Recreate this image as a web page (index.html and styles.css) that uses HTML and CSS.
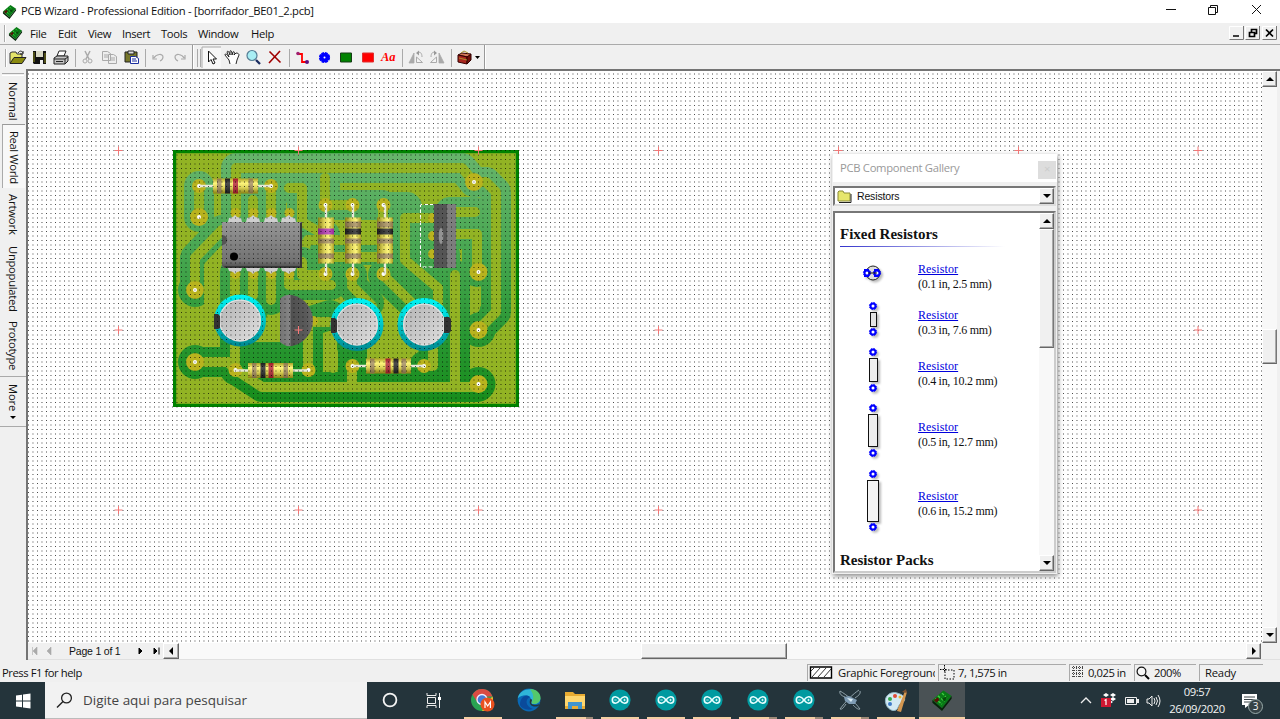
FILE: index.html
```html
<!DOCTYPE html>
<html lang="en">
<head>
<meta charset="utf-8">
<title>PCB Wizard</title>
<link rel="stylesheet" href="styles.css">
</head>
<body>
<svg class="defs" width="0" height="0">
  <defs>
    <symbol id="chip" viewBox="0 0 16 16"><path d="M1 8 9 1l6 4-7 9z" fill="#087a16"/><path d="M1 8l7 6v2L1 10zM8 14l7-9v2l-7 9z" fill="#07250a"/><path d="M3 7l5 4M5 5l5 4M8 3l4 4" stroke="#3fcf3f" stroke-width="1" stroke-dasharray="2 1"/><path d="M2 8l3-2 1 2-2 2z" fill="#571208"/><path d="M8 7l4-2-2 4z" fill="#064b0b"/></symbol>
    <symbol id="arduino" viewBox="0 0 22 22"><circle cx="11" cy="11" r="10.6" fill="#009aa0"/><path d="M11 11C9 8.300 7.800 7.800 6.500 7.800a3.200 3.200 0 0 0 0 6.400C7.800 14.200 9 13.700 11 11s3.200-3.200 4.500-3.200a3.200 3.200 0 0 1 0 6.400c-1.300 0-2.500-.5-4.500-3.200z" fill="none" stroke="#e8ffff" stroke-width="1.600"/><path d="M5.300 11h2.400M14.300 11h2.400M15.500 9.800v2.400" stroke="#e8ffff" stroke-width=".8"/></symbol>
    <symbol id="pad" viewBox="0 0 10 10"><circle cx="5" cy="5" r="2.500" fill="#fff" stroke="#00f" stroke-width="2"/><circle cx="5" cy="5" r="3.600" fill="none" stroke="#00f" stroke-width="1" stroke-dasharray="1.500 1.330"/></symbol>
    <linearGradient id="gap" gradientUnits="userSpaceOnUse" x1="0" y1="150" x2="0" y2="407"><stop offset="0" stop-color="#68b56c"/><stop offset=".35" stop-color="#4ca955"/><stop offset=".7" stop-color="#2b9835"/><stop offset="1" stop-color="#168c1a"/></linearGradient>
    <linearGradient id="tubeV" x1="0" y1="0" x2="0" y2="1"><stop offset="0" stop-color="#c4b92a"/><stop offset=".3" stop-color="#fff45c"/><stop offset=".6" stop-color="#f2e64a"/><stop offset="1" stop-color="#b5aa18"/></linearGradient>
    <linearGradient id="shadeV" x1="0" y1="0" x2="0" y2="1"><stop offset="0" stop-color="#000" stop-opacity=".12"/><stop offset=".3" stop-color="#fff" stop-opacity=".2"/><stop offset="1" stop-color="#000" stop-opacity=".25"/></linearGradient>
    <linearGradient id="ic" x1="0" y1="0" x2="0" y2="1"><stop offset="0" stop-color="#969696"/><stop offset=".85" stop-color="#727272"/><stop offset="1" stop-color="#4c4c4c"/></linearGradient>
    <linearGradient id="cyan" x1="0" y1="0" x2="0" y2="1"><stop offset="0" stop-color="#00f4f4"/><stop offset=".35" stop-color="#00d8d8"/><stop offset="1" stop-color="#008890"/></linearGradient>
    <linearGradient id="lid" x1="0" y1="0" x2="1" y2="1"><stop offset="0" stop-color="#b4b4b4"/><stop offset=".55" stop-color="#cacaca"/><stop offset="1" stop-color="#e0e0e0"/></linearGradient>
    <linearGradient id="to92" x1="0" y1="0" x2="1" y2="0"><stop offset="0" stop-color="#747474"/><stop offset=".3" stop-color="#858585"/><stop offset=".34" stop-color="#505050"/><stop offset=".8" stop-color="#5a5a5a"/><stop offset="1" stop-color="#6c6c6c"/></linearGradient>
    <pattern id="grid" x="28" y="60" width="45" height="45" patternUnits="userSpaceOnUse">
      <path d="M0 .5H45M0 5H45M0 9.500H45M0 14H45M0 18.500H45M0 23H45M0 27.500H45M0 32H45M0 36.500H45M0 41H45" stroke="#000" stroke-opacity=".8" stroke-width=".95" stroke-dasharray=".95 3.550"/>
    </pattern>
    <g id="res">
      <path d="M-14 7.500H59" stroke="#e9ead8" stroke-width="2.400"/>
      <rect width="45" height="15" fill="url(#tubeV)"/>
      <path d="M4 0h4.500v15H4zM35.500 0H40v15h-4.500z" fill="#a58c56"/>
    </g>
    <g id="cross"><path d="M-4 0H4M0-4V4" stroke="#f47878" stroke-width="1"/></g>
  </defs>
</svg>

<div class="app">
  <header class="titlebar">
    <svg class="appicon" width="15" height="15"><use href="#chip"/></svg>
    <span class="title">PCB Wizard - Professional Edition - [borrifador_BE01_2.pcb]</span>
    <svg class="winbtns" width="100" height="22"><path d="M2 9.500h10M44.500 7.500h7v7h-7zM46.500 7.500v-2h7v7h-2" fill="none" stroke="#111"/><path d="M88 5l9 9M97 5l-9 9" stroke="#111"/></svg>
  </header>

  <nav class="menubar">
    <i class="grip"></i>
    <svg class="appicon" width="15" height="15"><use href="#chip"/></svg>
    <span class="m1">File</span><span class="m2">Edit</span><span class="m3">View</span><span class="m4">Insert</span><span class="m5">Tools</span><span class="m6">Window</span><span class="m7">Help</span>
    <svg class="mdibtns" width="50" height="14"><path d="M.5.500h14v13H.5zM16.500.500h14v13h-14zM33.500.500h14v13h-14z" fill="#f0f0f0" stroke="#fff"/><path d="M.5 13.500h14V0M16.500 13.500h14V0M33.500 13.500h14V0" fill="none" stroke="#777"/><path d="M4 10h6M20.500 6.500h5v4h-5zM22.500 6V3.500h5v4H26M37 3.500l7 7M44 3.500l-7 7" fill="none" stroke="#000" stroke-width="1.700"/></svg>
  </nav>

  <div class="toolbar">
    <svg width="486" height="24" viewBox="0 45 486 24">
      <path d="M5.500 49V67M197.500 49V67M200.500 49V67M75.500 49V67M145.500 49V67M289.500 49V67M402.500 49V67M451.500 49V67" stroke="#aaa"/>
      <path d="M192.500 45V69M484.500 45V69" stroke="#999"/><path d="M193.500 45V69M6.500 49V67M485.500 45V69" stroke="#fff"/>
      <path d="M10 63V53l2-1h4l1 2h5v3" fill="#e4e46a" stroke="#333"/><path d="M10 63.500l4-6h12l-4 6z" fill="#8a8a10" stroke="#222"/><path d="M18 53c2-3 4-2 5 0m0-2v3h-3" fill="none" stroke="#222"/>
      <path d="M33 51h13v13H34l-1-1z" fill="#111"/><path d="M36 51h7v6h-7z" fill="#d9d9c5"/><path d="M34 52v10M45 53v10" stroke="#8b8b1c"/><path d="M40 60h3v4h-3z" fill="#eee"/>
      <path d="M57 56l2-5h7l-2 5z" fill="#fff" stroke="#222"/><path d="M54 58l3-2h11v5l-3 3H54z" fill="#c4c4c4" stroke="#222"/><path d="M54 59h11l3-2M65 59v5M56 61.500h7" fill="none" stroke="#222"/>
      <path d="M85 51l4 8M90 51l-4 8" stroke="#aaa" stroke-width="1.500"/><circle cx="85" cy="61" r="2" fill="none" stroke="#aaa"/><circle cx="90" cy="61" r="2" fill="none" stroke="#aaa"/>
      <path d="M102.500 51.500h5l3 2v7h-8zM108.500 54.500h5l3 2v7h-8zM104 55h4M104 57h4M110 58h5M110 60h5" fill="#eee" stroke="#aaa"/>
      <path d="M125 52h12v10h-12z" fill="#77772b" stroke="#222"/><path d="M128 51h6v3h-6z" fill="#ddd" stroke="#222"/><path d="M130.500 56.500h5l3 2v5h-8z" fill="#fff" stroke="#1c2fa0"/><path d="M132 59h4M132 61h5" stroke="#1c2fa0"/>
      <path d="M153 55v4h4M154 58c2-4 9-5 9-1 0 1-1 3-3 4M185 55v4h-4M184 58c-2-4-9-5-9-1 0 1 1 3 3 4" fill="none" stroke="#aaa" stroke-width="1.200"/>
      <path d="M202 47h19v21h-19z" fill="#f7f7f7"/><path d="M202 68V47h19" fill="none" stroke="#aaa"/>
      <path d="M208.500 51v11l2.500-2.500 2 4.500 2-1-2-4h3.500z" fill="#fff" stroke="#111"/>
      <path d="M230 64l-1-4-4-5c0-2 2-1 4 2l-2-5c1-2 2 0 3 3v-4c1-1 2 0 2 4l1-3c1-1 2 0 1 3l2-2c2 0 3 1 3 2l-2 5-1 4" fill="#fff" stroke="#111" stroke-width=".9"/>
      <circle cx="252" cy="55.500" r="5" fill="#a8eef4" stroke="#557d95" stroke-width="1.200"/><path d="M256 60l4 4" stroke="#1a2c60" stroke-width="2.300"/>
      <path d="M269.500 51.500l11 11M280 51l-11 12" stroke="#a00000" stroke-width="1.600"/>
      <path d="M297 54h5v8h5" fill="none" stroke="#f00" stroke-width="1.800"/><circle cx="298" cy="53.500" r="1.800" fill="#a02070"/><circle cx="307" cy="62" r="2" fill="#601080"/>
      <circle cx="324.500" cy="57.500" r="4.600" fill="#00f" stroke="#00f" stroke-width="2" stroke-dasharray="2.800 .8"/><circle cx="324.500" cy="57.500" r="1" fill="#fff"/>
      <path d="M340.500 53h11v9h-11z" fill="#008200" stroke="#153c15"/><path d="M362.500 53h11v9h-11z" fill="red" stroke="#e03030"/>
      <path d="M409 63l5-10v10zM440 63l-1 0V53l5 10z" fill="#aaa" stroke="#aaa" stroke-width=".8"/><path d="M416.500 62.500V57l6 5.500zM436.500 62.500V57l-6 5.500z" fill="#f4f4f4" stroke="#aaa"/><path d="M417 53c3-2 5 0 5 4M436 53c-3-2-5 0-5 4" fill="none" stroke="#aaa"/><path d="M416 53l3-2.500v5zM437 53l-3-2.500v5z" fill="#999"/>
      <path d="M458 55l4-2 9 1-3 3z" fill="#d27b5b" stroke="#300"/><path d="M458 55l9 2v7l-9-2z" fill="#a9261e" stroke="#300"/><path d="M467 57l4-3v6l-4 4z" fill="#701109" stroke="#300"/><path d="M461 53l3-2 4 2M459 58l8 2" fill="none" stroke="#ab942e"/><path d="M475 56h5l-2.500 3z" fill="#000"/>
    </svg>
    <span class="aa">Aa</span>
  </div>

  <main class="work">
    <aside class="tabs">
      <i class="hgrip"></i>
      <span class="t1">Normal</span><span class="t2 active">Real World</span><span class="t3">Artwork</span><span class="t4">Unpopulated</span><span class="t5">Prototype</span>
      <span class="t6">More<b></b></span>
    </aside>

    <section class="document">
      <div class="sheetrow">
      <svg class="sheet" width="1234" height="572" viewBox="28 71 1234 572">
        <rect x="28" y="71" width="1234" height="572" fill="#fff"/>
        <svg x="173" y="150" width="346" height="257" viewBox="173 150 346 257">
          <rect x="173" y="150" width="346" height="257" fill="#92b324"/>
          <!-- clearance around copper -->
          <g fill="none" stroke="url(#gap)" stroke-width="30" stroke-linejoin="round" stroke-linecap="round">
            <path d="M474 182L462 168H236V214"/>
            <path d="M474 182H486L496 192V312L478 330"/>
            <path d="M199 186V217"/>
            <path d="M195 290V258L222 230"/>
            <path d="M271 186V222M253 200V222M289 188H302V222L325 235"/>
            <path d="M325 205H352L382 205M325 205V178M383 207H407"/>
            <path d="M325 275H302V262M325 275V250H383"/>
            <path d="M235 272V315M253 272V310M271 272V300M289 272V285H331"/>
            <path d="M352 275V286L369 303M383 275L418 309M407 220V264L438 292V312M407 220H438"/>
            <path d="M433 237H408M450 234H477V272M450 212H475M433 254H445V270"/>
            <path d="M195 362H228L236 370 262 387H478M235 335V370"/>
            <path d="M308 370V322L330 315M245 357H290M352 367V345M424 366H433V355M455 275V380"/>
          </g>
          <g fill="url(#gap)"><circle cx="195" cy="290" r="17"/><circle cx="195" cy="362" r="17"/><circle cx="478.500" cy="330" r="17"/><circle cx="478.500" cy="384" r="17"/></g>
          <!-- copper tracks -->
          <g fill="none" stroke="#92b324" stroke-width="10" stroke-linejoin="round" stroke-linecap="round">
            <path d="M474 182L462 168H236V214"/>
            <path d="M474 182H486L496 192V312L478 330"/>
            <path d="M199 186V217"/>
            <path d="M195 290V258L222 230M209 335V266L224 250"/>
            <path d="M271 186V222M253 200V222M289 188H302V222L325 235"/>
            <path d="M325 205H352M325 205V178M383 205V220"/>
            <path d="M325 275H302V262M308 240H383M325 257H383"/>
            <path d="M235 272V300M253 272V295M271 272V300M289 272V285H331"/>
            <path d="M352 275V286L372 306M383 275L418 309M405 218V260L438 288V315M405 218H438"/>
            <path d="M450 234H477V272M450 212H475"/>
            <path d="M195 362H228L236 370 262 387H478M235 335V370"/>
            <path d="M308 370V322L330 322M333 352V368M352 367V387M424 366H433V345M455 275V385"/>
            <path d="M475 296V308"/>
          </g>
          <g fill="#b9b31e">
            <circle cx="199" cy="186" r="7"/><circle cx="271" cy="186" r="7"/><circle cx="199" cy="217" r="9"/><circle cx="195" cy="290" r="9"/><circle cx="195" cy="362" r="9"/><circle cx="474" cy="182" r="9"/><circle cx="478.500" cy="272" r="9"/><circle cx="478.500" cy="330" r="9"/><circle cx="478.500" cy="384" r="9"/>
            <circle cx="325.500" cy="205" r="7"/><circle cx="352.500" cy="205" r="7"/><circle cx="383.500" cy="205" r="7"/><circle cx="325.500" cy="274" r="7"/><circle cx="352.500" cy="274" r="7"/><circle cx="383.500" cy="274" r="7"/>
            <circle cx="235.500" cy="370" r="7"/><circle cx="308.500" cy="370" r="7"/><circle cx="352.500" cy="366" r="7"/><circle cx="424" cy="366" r="7"/>
            <circle cx="235.500" cy="213" r="5"/><circle cx="253.500" cy="213" r="5"/><circle cx="271.500" cy="213" r="5"/><circle cx="289.500" cy="213" r="5"/><circle cx="235.500" cy="274" r="5"/><circle cx="253.500" cy="274" r="5"/><circle cx="271.500" cy="274" r="5"/><circle cx="289.500" cy="274" r="5"/>
            <circle cx="433" cy="218" r="5"/><circle cx="433" cy="236" r="5"/><circle cx="433" cy="254" r="5"/><circle cx="313" cy="321" r="5"/>
          </g>
          <rect x="174.500" y="151.500" width="343" height="254" fill="none" stroke="#008200" stroke-width="3.400"/>
          <g fill="#fff"><circle cx="199" cy="186" r="2"/><circle cx="271" cy="186" r="2"/><circle cx="199" cy="217" r="2"/><circle cx="195" cy="290" r="2"/><circle cx="195" cy="362" r="2"/><circle cx="474" cy="182" r="2"/><circle cx="478.500" cy="272" r="2"/><circle cx="478.500" cy="330" r="2"/><circle cx="478.500" cy="384" r="2"/><circle cx="325.500" cy="205" r="2"/><circle cx="352.500" cy="205" r="2"/><circle cx="383.500" cy="205" r="2"/><circle cx="325.500" cy="274" r="2"/><circle cx="352.500" cy="274" r="2"/><circle cx="383.500" cy="274" r="2"/><circle cx="235.500" cy="370" r="2"/><circle cx="308.500" cy="370" r="2"/><circle cx="352.500" cy="366" r="2"/><circle cx="424" cy="366" r="2"/></g>

          <g transform="translate(213 178.500)"><use href="#res"/><path d="M12 0h5v15h-5z" fill="#222"/><path d="M20 0h5v15h-5z" fill="#b6232d"/><rect width="45" height="15" fill="url(#shadeV)"/></g>
          <g transform="translate(248 363)"><use href="#res"/><path d="M12.500 0h5v15h-5z" fill="#222"/><path d="M20.500 0h5v15h-5z" fill="#b6232d"/><rect width="45" height="15" fill="url(#shadeV)"/></g>
          <g transform="translate(366 358.500)"><use href="#res"/><path d="M19.500 0h5v15h-5z" fill="#b6232d"/><path d="M27.500 0h5v15h-5z" fill="#222"/><rect width="45" height="15" fill="url(#shadeV)"/></g>
          <g transform="translate(334 217.500) rotate(90)"><path d="M-12 8H57" stroke="#e9ead8" stroke-width="2.400"/><rect width="46" height="16" fill="url(#tubeV)"/><path d="M11 0h6v16h-6z" fill="#b232b2"/><path d="M21 0h5v16h-5zM36 0h5v16h-5z" fill="#a58c56"/><rect width="46" height="16" fill="url(#shadeV)"/></g>
          <g transform="translate(361 217.500) rotate(90)"><path d="M-12 8H57" stroke="#e9ead8" stroke-width="2.400"/><rect width="46" height="16" fill="url(#tubeV)"/><path d="M4 0h6v16H4zM21 0h5v16h-5zM36 0h5v16h-5z" fill="#a58c56"/><path d="M11 0h6v16h-6z" fill="#222"/><rect width="46" height="16" fill="url(#shadeV)"/></g>
          <g transform="translate(393 217.500) rotate(90)"><path d="M-12 8H57" stroke="#e9ead8" stroke-width="2.400"/><rect width="46" height="16" fill="url(#tubeV)"/><path d="M4 0h6v16H4zM21 0h5v16h-5zM36 0h5v16h-5z" fill="#a58c56"/><path d="M11 0h6v16h-6z" fill="#222"/><rect width="46" height="16" fill="url(#shadeV)"/></g>

          <g fill="#cfcfcf"><path d="M228 222l1-4 4-1 2-2 2 2 4 1 1 4zM246 222l1-4 4-1 2-2 2 2 4 1 1 4zM264 222l1-4 4-1 2-2 2 2 4 1 1 4zM281 222l1-4 4-1 3-2 2 2 4 1 1 4z"/><path d="M228 268l1 3 4 1 2 2 2-2 4-1 1-3zM246 268l1 3 4 1 2 2 2-2 4-1 1-3zM264 268l1 3 4 1 2 2 2-2 4-1 1-3zM281 268l1 3 4 1 3 2 2-2 4-1 1-3z"/></g>
          <path d="M222 222h80v46h-78l-2-2z" fill="url(#ic)"/><path d="M300 223v43h-76l2 2h76v-46z" fill="#383838"/><path d="M222 235c7 0 7 10 0 10z" fill="#555"/><circle cx="234" cy="256.500" r="4" fill="#000"/>

          <circle cx="240" cy="320.500" r="26" fill="url(#cyan)"/><circle cx="240" cy="320.500" r="21" fill="url(#lid)"/><circle cx="240" cy="320.500" r="20.300" fill="none" stroke="#e0e0e0" stroke-width="1.300"/><path d="M214 314h4l2 2v12l-2 1h-4z" fill="#333"/>
          <circle cx="357" cy="324.500" r="26.500" fill="url(#cyan)"/><circle cx="357" cy="324.500" r="21" fill="url(#lid)"/><circle cx="357" cy="324.500" r="20.300" fill="none" stroke="#e0e0e0" stroke-width="1.300"/><path d="M331 318h4l2 2v12l-2 1h-4z" fill="#333"/>
          <circle cx="424" cy="324.500" r="26.500" fill="url(#cyan)"/><circle cx="424" cy="324.500" r="21" fill="url(#lid)"/><circle cx="424" cy="324.500" r="20.300" fill="none" stroke="#e0e0e0" stroke-width="1.300"/><path d="M444 317h5l2 2v12l-2 2h-5z" fill="#333"/>
          <path d="M280 299q5-5 12-4a26 26 0 0 1 0 51q-7 1-12-4z" fill="url(#to92)"/>

          <path d="M434 204.500h-13.500v62.500H434" fill="none" stroke="#fff" stroke-dasharray="4 2"/>
          <path d="M434 204h22v64h-22z" fill="#555"/><path d="M447 204h9v64h-9z" fill="#7d7d7d"/><ellipse cx="441" cy="236" rx="2.300" ry="8" fill="#929292"/>
        </svg>
        <rect x="28" y="71" width="1234" height="572" fill="url(#grid)"/>
        <use href="#cross" x="118.500" y="150.500"/><use href="#cross" x="298.500" y="150.500"/><use href="#cross" x="478.500" y="150.500"/><use href="#cross" x="658.500" y="150.500"/><use href="#cross" x="838.500" y="150.500"/><use href="#cross" x="1018.500" y="150.500"/><use href="#cross" x="1198" y="150.500"/>
        <use href="#cross" x="118.500" y="330"/><use href="#cross" x="298.500" y="330"/><use href="#cross" x="658.500" y="330"/><use href="#cross" x="1198" y="330"/>
        <use href="#cross" x="118.500" y="510"/><use href="#cross" x="298.500" y="510"/><use href="#cross" x="478.500" y="510"/><use href="#cross" x="658.500" y="510"/><use href="#cross" x="1198" y="510"/>
      </svg>
      <div class="vscroll big"><button class="up"></button><i class="thumb"></i><button class="down"></button></div>
      </div>
      <div class="pager">
        <svg width="38" height="16"><path d="M4.500 4v8M9 4v8L5 8zM23 4v8l-4-4z" fill="#aaa" stroke="#aaa" stroke-width=".6"/></svg>
        <span class="pagelabel">Page 1 of 1</span>
        <svg width="32" height="16"><path d="M5 5v6l3-3zM20 5v6l3-3zM25 4.500v7" fill="#000" stroke="#000"/></svg>
        <button class="left"></button>
        <div class="track"><i></i></div>
        <button class="right"></button>
        <i class="corner"></i>
      </div>
    </section>
  </main>

  <footer class="status">
    <span class="help">Press F1 for help</span>
    <div class="cell c1"><svg width="24" height="13"><path d="M1.500 1h21v11h-21z" fill="#fff" stroke="#000" stroke-width="1.400"/><path d="M3 11L11 2M9 11l8-9M15 11l7-8M2 5l3-3" stroke="#222" stroke-width=".9"/></svg><span>Graphic Foreground</span></div>
    <div class="cell c2"><svg width="16" height="15"><path d="M0 4.500h7M4.500 0v7" stroke="#000" stroke-dasharray="1.500 1"/><path d="M5 5h9v9H5z" fill="none" stroke="#000" stroke-dasharray="1.500 1.500"/></svg><span>7, 1,575 in</span></div>
    <div class="cell c3"><svg width="13" height="13"><path d="M1 1.500h11M1 4.500h11M1 7.500h11M1 10.500h11M2.500 0v12M5.500 0v12M8.500 0v12M11.500 0v12" stroke="#444" stroke-dasharray="1 1"/></svg><span>0,025 in</span></div>
    <div class="cell c4"><svg width="14" height="14"><circle cx="5.500" cy="5.500" r="4.400" fill="#f7f7f7" stroke="#111" stroke-width="1.200"/><path d="M9 9l4 4" stroke="#000" stroke-width="2"/></svg><span>200%</span></div>
    <div class="cell c5"><span>Ready</span></div>
  </footer>

  <div class="taskbar">
    <div class="start"><svg width="16" height="16"><path d="M1 2.500l6-.8v5.800H1zM8 1.500L15.500.5v7H8zM1 8.500h6v5.800l-6-.8zM8 8.500h7.500v7L8 14.500z" fill="#fff"/></svg></div>
    <div class="search"><svg width="17" height="17"><circle cx="10.500" cy="6" r="4.900" fill="none" stroke="#222" stroke-width="1.300"/><path d="M7 9.500L1 15.500" stroke="#222" stroke-width="1.400"/></svg><span>Digite aqui para pesquisar</span></div>
    <div class="apps">
      <div><svg width="18" height="18"><circle cx="9" cy="9" r="6.400" fill="none" stroke="#f4f4f4" stroke-width="1.800"/></svg></div>
      <div class="view"><svg width="17" height="17"><path d="M1 1v2.500h9V1M1 16v-2.500h9V16M1.500 5.500h8v6h-8zM13.500 1v15" fill="none" stroke="#eee"/><path d="M12 5h3v3h-3z" fill="#fff"/></svg></div>
      <div class="on"><svg width="25" height="25"><circle cx="12" cy="12" r="11" fill="#29a352"/><path d="M2.500 6.500A11 11 0 0 1 22.500 8.500H12l-4.500 6z" fill="#d94b43"/><path d="M22.500 8.500A11 11 0 0 1 12 23l5-9z" fill="#f2bd2c"/><circle cx="12" cy="11.500" r="5" fill="#4779d5" stroke="#eef" stroke-width="1.300"/><circle cx="17.500" cy="16.500" r="7" fill="#e8501f"/><path d="M15 20v-6l2.700 4 2.700-4v6" fill="none" stroke="#fff" stroke-width="1.200"/></svg></div>
      <div><svg width="24" height="24"><circle cx="12" cy="12" r="11.400" fill="#0968b4"/><path d="M.8 10C3 1 16-2 22 6c3 6 0 10-5 10-4 0-5-1-3-3 1-6-7-8-13-3z" fill="#2fb6d8"/><path d="M13 1c9 0 13 8 9 13-3 3-8 2-7 0C18 8 15 4 13 1z" fill="#54c86b"/><path d="M3 17C3 9 9 6 13 9c-5 2-5 9 3 12-6 2-12-1-13-4z" fill="#0a4a9b"/><path d="M13.500 11c2 0 1.500 2 1 3-1 3 4 4 8 2l-1 2c-5 2-11-1-8-7z" fill="#24343b"/></svg></div>
      <div class="on split"><svg width="22" height="20"><path d="M1 2h8l2 2h10v15H1z" fill="#e9ac32"/><path d="M1 6h20v10H1z" fill="#ffd76e"/><path d="M4 19v-7h14v7h-4v-3H8v3z" fill="#4194cd"/></svg></div>
      <div class="on"><svg width="22" height="22"><use href="#arduino"/></svg></div>
      <div class="on"><svg width="22" height="22"><use href="#arduino"/></svg></div>
      <div class="on"><svg width="22" height="22"><use href="#arduino"/></svg></div>
      <div class="on split"><svg width="22" height="22"><use href="#arduino"/></svg></div>
      <div class="on split"><svg width="22" height="22"><use href="#arduino"/></svg></div>
      <div class="on split"><svg width="24" height="22"><path d="M2 2c7 4 14 10 20 18M21 1C15 5 8 12 2 20M2 2c-1 3 2 5 5 6M22 2c1 3-2 5-5 7M2 20c2 1 4-2 6-5M22 20c-2 1-5-2-7-4" fill="none" stroke="#9caeb5" stroke-width=".9"/><path d="M6 8l5-1 8 4-2 4-6 0-4-3z" fill="#7f9cb4"/><path d="M9 9l6 1-2 3z" fill="#dceef6"/></svg></div>
      <div class="on"><svg width="24" height="23"><path d="M2 15C-1 7 7 2 13 4c8 2 10 7 5 10-4 1-3 5-6 7-4 2-9-2-10-6z" fill="#d4eaf3" stroke="#91b7c5"/><circle cx="6" cy="10" r="2" fill="#38aa4e"/><circle cx="11" cy="7" r="2" fill="#e04b38"/><circle cx="6" cy="15" r="2" fill="#3f7bc8"/><circle cx="16" cy="8" r="1.500" fill="#eab52f"/><path d="M13 22L21 2l2 1-6 20z" fill="#d49750"/><path d="M18 3l4-3 1 4z" fill="#7b502f"/></svg></div>
      <div class="on current"><svg width="22" height="22"><use href="#chip"/></svg></div>
    </div>
    <div class="tray">
      <svg width="82" height="20"><path d="M2 12l5-5 5 5" fill="none" stroke="#eee" stroke-width="1.300"/><path d="M24 4l3-2 3 2-3 2zM31 4l3-2 3 2-3 2zM31 8l3-2 3 2-3 2zM28 11l3-2 3 2-3 2z" fill="#fff"/><path d="M22 7h10v9H22z" fill="#cf1731"/><path d="M25.500 9.500l1.500-1V14" fill="none" stroke="#fff" stroke-width="1.200"/><path d="M46.500 6.500h11v7h-11z" fill="none" stroke="#eee"/><path d="M48 8h7v4h-7zM58 8h2v4h-2z" fill="#eee"/><path d="M68 8h2l3-3v10l-3-3h-2zM75 7q2 3 0 6M77 6q3 4 0 8M79 4q4 6 0 12" fill="none" stroke="#eee"/></svg>
      <div class="clock"><span>09:57</span><span>26/09/2020</span></div>
      <div class="notify"><svg width="18" height="16"><path d="M1 1h15v11H8l-4 3v-3H1z" fill="#fff"/><path d="M3 4h11M3 6.500h11M3 9h7" stroke="#3a4448"/></svg><b>3</b></div>
    </div>
  </div>
</div>

<div class="gallery">
  <div class="ghead"><span>PCB Component Gallery</span><i>×</i></div>
  <div class="combo"><svg width="16" height="13"><path d="M1 11V2l1-1h4l1 2h6v8z" fill="#e6e66c" stroke="#8b8b37"/><path d="M2 12.500h12V4" fill="none" stroke="#222"/></svg><span>Resistors</span><button class="down"></button></div>
  <div class="glist">
    <div class="gitems">
      <h2>Fixed Resistors</h2>
      <hr>
      <div class="item i1"><svg width="24" height="24"><circle cx="11" cy="11" r="7" fill="#ddd" stroke="#222"/><path d="M2 7h5v8H2zM12 7h5v8h-5z" fill="#00f"/><use href="#pad" x="0" y="6" width="10" height="10"/><use href="#pad" x="10" y="6" width="10" height="10"/><path d="M6 11h9" stroke="#111"/></svg><p><a>Resistor</a>(0.1 in, 2.5 mm)</p></div>
      <div class="item i2"><svg width="24" height="38"><use href="#pad" x="6" y="0" width="10" height="10"/><rect x="8.500" y="11.500" width="6" height="14" fill="#e3e3e3" stroke="#111"/><use href="#pad" x="6" y="26" width="10" height="10"/></svg><p><a>Resistor</a>(0.3 in, 7.6 mm)</p></div>
      <div class="item i3"><svg width="24" height="48"><use href="#pad" x="6" y="0" width="10" height="10"/><rect x="7.500" y="11.500" width="8" height="23" fill="#eee" stroke="#111"/><use href="#pad" x="6" y="36" width="10" height="10"/></svg><p><a>Resistor</a>(0.4 in, 10.2 mm)</p></div>
      <div class="item i4"><svg width="24" height="58"><use href="#pad" x="6" y="0" width="10" height="10"/><rect x="6.500" y="11.500" width="9" height="32" fill="#eee" stroke="#111"/><use href="#pad" x="6" y="45" width="10" height="10"/></svg><p><a>Resistor</a>(0.5 in, 12.7 mm)</p></div>
      <div class="item i5"><svg width="24" height="66"><use href="#pad" x="6" y="0" width="10" height="10"/><rect x="5.500" y="11.500" width="11" height="41" fill="#f4f4f4" stroke="#111"/><use href="#pad" x="6" y="53" width="10" height="10"/></svg><p><a>Resistor</a>(0.6 in, 15.2 mm)</p></div>
      <h2 class="packs">Resistor Packs</h2>
    </div>
    <div class="vscroll small"><button class="up"></button><i class="thumb"></i><button class="down"></button></div>
  </div>
</div>
</body>
</html>
```
FILE: styles.css
```css
* { box-sizing: border-box; }
body { margin: 0; width: 1280px; height: 719px; overflow: hidden; background: #f0f0f0; color: #111; font: 11.25px "Open Sans", "Noto Sans", sans-serif; }
.defs { position: absolute; }
svg { display: block; flex: none; }
i { font-style: normal; }
.app { display: flex; flex-direction: column; height: 719px; }
.titlebar { height: 23px; background: #fff; display: flex; align-items: center; padding: 0 0 2px 2px; }
.title { margin-left: 4px; letter-spacing: -.28px; }
.appicon { position: relative; top: 1px; }
.winbtns { margin-left: auto; margin-right: 16px; }
.menubar { height: 21px; display: flex; align-items: center; padding-left: 4px; }
.grip { width: 2px; height: 17px; border-left: 1px solid #aaa; border-right: 1px solid #fff; margin-right: 2px; }
.menubar span { letter-spacing: -.35px; }
.menubar .appicon { top: 0; }
.m1 { width: 28px; margin-left: 7px; }
.m2 { width: 30px; }
.m3 { width: 34px; }
.m4 { width: 39px; }
.m5 { width: 37px; }
.m6 { width: 53px; }
.mdibtns { margin-left: auto; margin-right: 1px; margin-bottom: 2px; }
.toolbar { height: 25px; border-top: 1px solid #aaa; position: relative; }
.aa { position: absolute; left: 381px; top: 5px; color: red; font: italic bold 12.5px "Liberation Serif", serif; }
.work { height: 592px; display: flex; }
.tabs { width: 26px; display: flex; flex-direction: column; }
.hgrip { width: 22px; height: 3px; margin: 4px 0 1px 2px; border-top: 1px solid #aaa; border-bottom: 1px solid #fff; }
.tabs span { writing-mode: vertical-rl; width: 23px; margin-left: 2px; display: flex; justify-content: center; align-items: center; letter-spacing: -.15px; }
.tabs .active { background: #f8f8f8; border-top: 1px solid #999; border-left: 1px solid #aaa; padding-top: 2px; letter-spacing: -.4px; }
.t1 { height: 47px; padding-top: 2px; } .t2 { height: 64px; } .t3 { height: 53px; } .t4 { height: 75px; }
.tabs .t4 { letter-spacing: -.3px; }
.tabs .t5 { height: 60px; letter-spacing: -.3px; }
.tabs .t6 { height: 51px; width: 26px; margin-left: 0; border-top: 1px solid #aaa; border-bottom: 1px solid #aaa; }
.t6 b { display: block; width: 0; height: 0; border: 3px solid transparent; border-top: 3px solid #000; border-bottom: 0; margin-top: 4px; }
.document { width: 1254px; border-left: 2px solid #747474; border-top: 2px solid #747474; height: 591px; }
.sheetrow { display: flex; height: 572px; }
button { flex: none; display: flex; align-items: center; justify-content: center; width: 15px; height: 16px; padding: 0; background: #f0f0f0; border: 1px solid #fff; border-right-color: #666; border-bottom-color: #666; box-shadow: inset -1px -1px #aaa; }
button::before { content: ""; border: 4px solid transparent; }
.up::before { border-top: 0; border-bottom-color: #000; }
.down::before { border-bottom: 0; border-top-color: #000; }
.left::before { border-left: 0; border-right-color: #000; }
.right::before { border-right: 0; border-left-color: #000; }
.vscroll { display: flex; flex-direction: column; background: #f8f8f8; }
.thumb { background: #f0f0f0; border: 1px solid #fff; border-right-color: #777; border-bottom-color: #666; box-shadow: inset -1px -1px #aaa; }
.big { width: 15px; }
.big .thumb { height: 35px; margin-top: 242px; }
.big .down { margin-top: auto; }
.pager { display: flex; align-items: center; height: 17px; background: #f0f0f0; border-bottom: 1px solid #e0e0e0; font: 10.5px "Liberation Sans", sans-serif; }
.pagelabel { width: 68px; padding-left: 3px; letter-spacing: -.2px; }
.pager .left { width: 16px; margin-left: -3px; }
.track { flex: 1; height: 16px; background: #f9f9f9; }
.track i { display: block; width: 146px; height: 16px; margin-left: 462px; background: #f0f0f0; border: 1px solid #fff; border-right-color: #666; border-bottom-color: #666; box-shadow: inset -1px -1px #aaa; }
.corner { width: 19px; }
.status { height: 21px; display: flex; align-items: center; padding-left: 2px; padding-top: 1px; letter-spacing: -.45px; }
.help { width: 805px; }
.cell { height: 17px; display: flex; align-items: center; gap: 4px; border-top: 1px solid #aaa; border-left: 1px solid #aaa; padding-left: 1px; overflow: hidden; white-space: nowrap; margin-right: 3px; }
.c1 { width: 128px; gap: 5px; letter-spacing: -.25px; } .c2 { width: 128px; gap: 2px; } .c3 { width: 62px; } .c4 { width: 62px; } .c5 { width: 64px; padding-left: 5px; letter-spacing: -.2px; }
.taskbar { height: 37px; background: #24343b; display: flex; }
.start { width: 45px; display: flex; align-items: center; justify-content: center; }
.search { width: 322px; background: #f2f2f2; border-bottom: 1px solid #bbb; display: flex; align-items: center; padding-left: 11px; font-size: 13.5px; color: #444; }
.search span { margin-left: 10px; letter-spacing: -.03px; }
.apps { display: flex; width: 600px; }
.apps div { width: 45.900px; flex: none; display: flex; align-items: center; justify-content: center; position: relative; }
.apps svg { margin-bottom: 1px; }
.apps .view { margin-right: 1px; padding-right: 2px; }
.apps .on::after { content: ""; position: absolute; left: 4px; right: 4px; bottom: 0; height: 2px; background: #f4cfa2; }
.apps .split::after { background: linear-gradient(90deg, #f4cfa2 80%, #9e8b78 80%); }
.apps .current { background: #4a5255; }
.apps .current::after { left: 0; right: 0; }
.tray { display: flex; align-items: center; margin-left: 112px; color: #f4f4f4; }
.clock { width: 58px; margin-left: 7px; padding-bottom: 2px; display: flex; flex-direction: column; align-items: center; line-height: 17px; letter-spacing: -.4px; }
.notify { margin-left: 15px; position: relative; }
.notify b { position: absolute; left: 7px; top: 6px; width: 15px; height: 15px; line-height: 13px; text-align: center; border: 1px solid #9aa; border-radius: 50%; background: #374347; font-size: 10px; font-weight: 400; }
.gallery { position: absolute; left: 832px; top: 154px; width: 225px; height: 420px; padding-left: 1px; background: #f0f0f0; box-shadow: 1px 2px 5px #888; }
.ghead { height: 28px; background: #fff; display: flex; align-items: center; justify-content: space-between; color: #999; padding: 0 0 1px 7px; letter-spacing: -.3px; }
.ghead i { background: #ddd; width: 18px; height: 18px; line-height: 15px; text-align: center; color: #ccc; margin-right: 1px; margin-top: 4px; }
.combo { margin: 4px 1px 5px 0; height: 20px; display: flex; align-items: center; background: #fff; border: 2px solid #777; border-right-color: #ddd; border-bottom-color: #ddd; padding-left: 2px; font: 10.5px "Liberation Sans", sans-serif; letter-spacing: -.15px; }
.combo span { margin-left: 4px; }
.combo button { margin-left: auto; }
.glist { height: 362px; margin-right: 1px; border: 2px solid #777; border-right-color: #ccc; border-bottom-color: #ccc; display: flex; background: #fff; }
.gitems { flex: 1; overflow: hidden; padding-left: 5px; font: 12px "Liberation Serif", serif; }
.gitems h2 { margin: 12px 0 0; font-size: 15px; line-height: 18px; white-space: nowrap; }
.gitems hr { height: 1px; border: 0; margin: 3px 34px 8px 0; background: linear-gradient(90deg, #33c, #fff); }
.item { display: flex; align-items: center; }
.item svg { margin: -6px 0 0 22px; filter: drop-shadow(2px 2px 1px #bbb); }
.item p { margin: 0 0 0 32px; line-height: 15px; white-space: nowrap; letter-spacing: -.28px; }
.item a { display: block; color: #00d; text-decoration: underline; letter-spacing: 0.1px; }
.i1 { height: 44px; } .i2 { height: 47px; } .i3 { height: 56px; } .i4 { height: 66px; } .i5 { height: 72px; }
.i5 svg { margin-top: -4px; }
.gitems .packs { margin-top: 11px; }
.small { width: 15px; }
.small .thumb { height: 119px; }
.small .down { margin-top: auto; }
```
